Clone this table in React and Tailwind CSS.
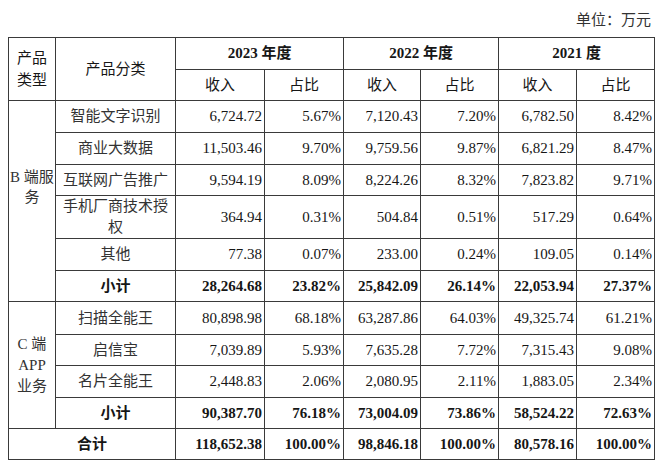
const font = { fontFamily: '"Liberation Serif", "Noto Sans CJK SC", serif' };

const bRows = [
  ["智能文字识别", "6,724.72", "5.67%", "7,120.43", "7.20%", "6,782.50", "8.42%", "h-[32px]"],
  ["商业大数据", "11,503.46", "9.70%", "9,759.56", "9.87%", "6,821.29", "8.47%", "h-[32px]"],
  ["互联网广告推广", "9,594.19", "8.09%", "8,224.26", "8.32%", "7,823.82", "9.71%", "h-[31px]"],
  ["手机厂商技术授权", "364.94", "0.31%", "504.84", "0.51%", "517.29", "0.64%", "h-[43px]"],
  ["其他", "77.38", "0.07%", "233.00", "0.24%", "109.05", "0.14%", "h-[32px]"],
];

const cRows = [
  ["扫描全能王", "80,898.98", "68.18%", "63,287.86", "64.03%", "49,325.74", "61.21%", "h-[33px]"],
  ["启信宝", "7,039.89", "5.93%", "7,635.28", "7.72%", "7,315.43", "9.08%", "h-[31px]"],
  ["名片全能王", "2,448.83", "2.06%", "2,080.95", "2.11%", "1,883.05", "2.34%", "h-[32px]"],
];

const td = "border border-[#3a3a3a] p-0";
const num = td + " text-right pr-[2px]";

function Nums({ vals, bold }) {
  return vals.map((v, i) => (
    <td key={i} className={num + (bold ? " font-bold" : "")}>
      {v}
    </td>
  ));
}

export default function App() {
  return (
    <div className="w-[660px] h-[464px] bg-white text-[#161616] text-[15px]" style={font}>
      <div className="h-[37px] flex items-center justify-end pr-[9px] pt-[4px] text-[#333]">
        单位：万元
      </div>
      <table className="ml-[8px] w-[646px] table-fixed border-collapse leading-[21px]">
        <colgroup>
          <col className="w-[47px]" />
          <col className="w-[120px]" />
          <col className="w-[89px]" />
          <col className="w-[79px]" />
          <col className="w-[77px]" />
          <col className="w-[78px]" />
          <col className="w-[78px]" />
          <col className="w-[78px]" />
        </colgroup>
        <tbody>
          <tr className="h-[32px]">
            <td rowSpan={2} className={td + " text-center leading-[22px]"}>
              产品
              <br />
              类型
            </td>
            <td rowSpan={2} className={td + " text-center"}>产品分类</td>
            <td colSpan={2} className={td + " text-center font-bold"}>2023 年度</td>
            <td colSpan={2} className={td + " text-center font-bold"}>2022 年度</td>
            <td colSpan={2} className={td + " text-center font-bold"}>2021 度</td>
          </tr>
          <tr className="h-[31px]">
            {["收入", "占比", "收入", "占比", "收入", "占比"].map((t, i) => (
              <td key={i} className={td + " text-center"}>{t}</td>
            ))}
          </tr>
          {bRows.map((r, i) => (
            <tr key={r[0]} className={r[7]}>
              {i === 0 && (
                <td rowSpan={6} className={td + " text-center whitespace-nowrap leading-[20px] pb-[29px] text-[#333]"}>
                  B 端服
                  <br />
                  务
                </td>
              )}
              <td className={td + " text-center px-[6px] text-[#333]"}>{r[0]}</td>
              <Nums vals={r.slice(1, 7)} />
            </tr>
          ))}
          <tr className="h-[31px]">
            <td className={td + " text-center font-bold"}>小计</td>
            <Nums bold vals={["28,264.68", "23.82%", "25,842.09", "26.14%", "22,053.94", "27.37%"]} />
          </tr>
          {cRows.map((r, i) => (
            <tr key={r[0]} className={r[7]}>
              {i === 0 && (
                <td rowSpan={4} className={td + " text-center leading-[21px] text-[#333]"}>
                  C 端
                  <br />
                  APP
                  <br />
                  业务
                </td>
              )}
              <td className={td + " text-center px-[6px] text-[#333]"}>{r[0]}</td>
              <Nums vals={r.slice(1, 7)} />
            </tr>
          ))}
          <tr className="h-[31px]">
            <td className={td + " text-center font-bold"}>小计</td>
            <Nums bold vals={["90,387.70", "76.18%", "73,004.09", "73.86%", "58,524.22", "72.63%"]} />
          </tr>
          <tr className="h-[31px]">
            <td colSpan={2} className={td + " text-center font-bold"}>合计</td>
            <Nums bold vals={["118,652.38", "100.00%", "98,846.18", "100.00%", "80,578.16", "100.00%"]} />
          </tr>
        </tbody>
      </table>
    </div>
  );
}
